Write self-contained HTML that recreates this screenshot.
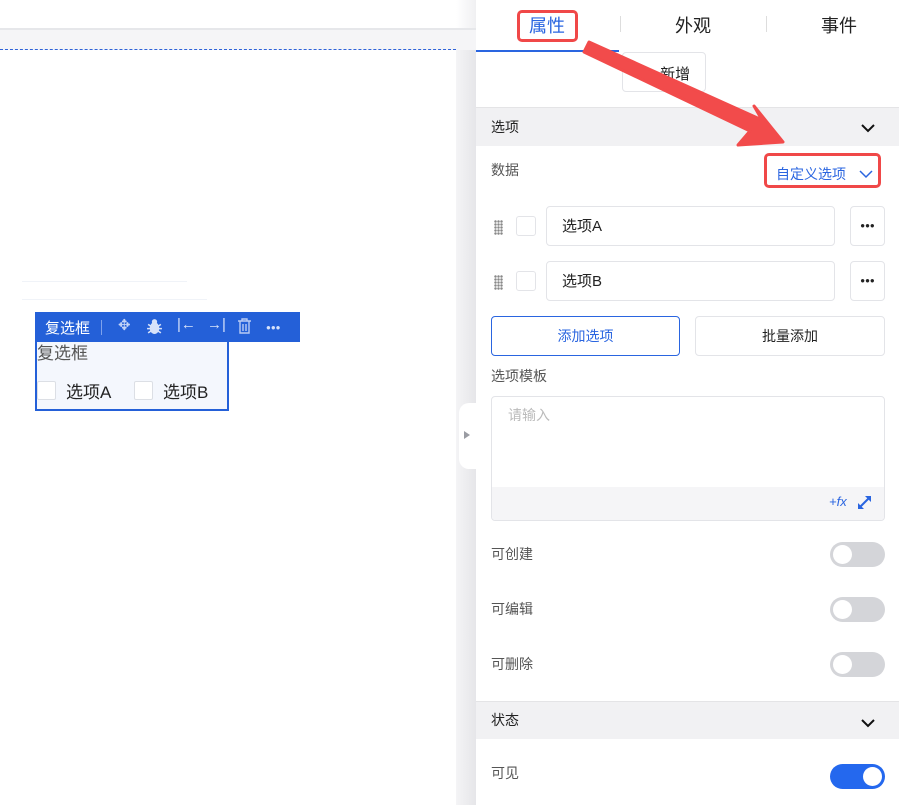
<!DOCTYPE html>
<html><head><meta charset="utf-8"><style>
*{box-sizing:border-box;margin:0;padding:0}
body{width:899px;height:805px;overflow:hidden;background:#fff;font-family:"Liberation Sans","Noto Sans CJK SC",sans-serif;position:relative;font-size:14px;color:#222}
.a{position:absolute}
.sw{position:absolute;left:830px;width:55px;height:25px;border-radius:13px;background:#d4d5d9}
.sw .k{position:absolute;left:3px;top:3px;width:19px;height:19px;border-radius:50%;background:#fff}
.lbl{position:absolute;left:491px;color:#555;font-size:14px}
.box{position:absolute;border:1px solid #e3e4e8;border-radius:4px;background:#fff}
.dots{position:absolute;left:0;width:33px;top:14px;text-align:center;font-size:8px;color:#222}
</style></head><body>
<div class="a" style="left:0;top:28px;width:476px;height:22px;background:#f5f5f7;border-top:2px solid #e6e7ea"></div>
<div class="a" style="left:0;top:49px;width:456px;height:0;border-top:1px dashed #2f63d8"></div>
<div class="a" style="left:456px;top:0;width:20px;height:28px;background:linear-gradient(90deg,#fff,#f0f0f2)"></div>
<div class="a" style="left:456px;top:50px;width:20px;height:755px;background:linear-gradient(90deg,#f4f4f6,#e6e6e9)"></div>
<div class="a" style="left:459px;top:403px;width:17px;height:66px;background:#fff;border-radius:10px 0 0 10px"></div>
<div class="a" style="left:464px;top:431px;width:0;height:0;border-left:6px solid #9a9ca3;border-top:4px solid transparent;border-bottom:4px solid transparent"></div>
<div class="a" style="left:22px;top:281px;width:165px;height:1px;background:#f0f3f8"></div>
<div class="a" style="left:22px;top:299px;width:185px;height:1px;background:#f0f3f8"></div>
<div class="a" style="left:35px;top:312px;width:265px;height:30px;background:#2460d8;color:#fff;font-size:15px">
<span class="a" style="left:10px;top:5px">复选框</span>
<span class="a" style="left:66px;top:8px;width:1px;height:15px;background:#7ea2ec"></span>
<span class="a" style="left:83px;top:4px;font-size:15px;color:#c5d5f7">✥</span>
<svg class="a" style="left:111px;top:6px" width="17" height="17" viewBox="0 0 16 16"><ellipse cx="8" cy="9.5" rx="4.5" ry="5.5" fill="#d7e2fa"/><circle cx="8" cy="3.5" r="2.5" fill="#d7e2fa"/><path d="M2 6l3 2M14 6l-3 2M1 10h3M15 10h-3M2 14l3-2M14 14l-3-2" stroke="#d7e2fa" stroke-width="1.5"/></svg>
<span class="a" style="left:142px;top:4px;color:#d7e2fa">|←</span>
<span class="a" style="left:172px;top:4px;color:#d7e2fa">→|</span>
<svg class="a" style="left:202px;top:6px" width="15" height="17" viewBox="0 0 15 17"><path d="M1 3h13M5 3V1h5v2M3 3v12h9V3M6 6v7M9 6v7" stroke="#b9cbf4" stroke-width="1.4" fill="none"/></svg>
<span class="a" style="left:231px;top:11px;font-size:8px;color:#d7e2fa">●●●</span>
</div>
<div class="a" style="left:35px;top:342px;width:194px;height:69px;background:#f4f7fd;border:2px solid #2460d8;border-top:none">
<span class="a" style="left:0;top:-3px;font-size:17px;color:#555">复选框</span>
<span class="a" style="left:0;top:39px;width:19px;height:19px;border:1px solid #dcdfe5;background:#fff;border-radius:2px"></span>
<span class="a" style="left:29px;top:36px;font-size:17px">选项A</span>
<span class="a" style="left:97px;top:39px;width:19px;height:19px;border:1px solid #dcdfe5;background:#fff;border-radius:2px"></span>
<span class="a" style="left:126px;top:36px;font-size:17px">选项B</span>
</div>
<div class="a" style="left:476px;top:0;width:423px;height:805px;background:#fff"></div>
<span class="a" style="left:529px;top:12px;font-size:18px;color:#2a65e0">属性</span>
<div class="a" style="left:517px;top:10px;width:61px;height:32px;border:3px solid #f04848;border-radius:5px"></div>
<span class="a" style="left:620px;top:16px;width:1px;height:16px;background:#ddd"></span>
<span class="a" style="left:675px;top:12px;font-size:18px">外观</span>
<span class="a" style="left:766px;top:16px;width:1px;height:16px;background:#ddd"></span>
<span class="a" style="left:821px;top:12px;font-size:18px">事件</span>
<div class="a" style="left:476px;top:50px;width:143px;height:2px;background:#2a65e0"></div>
<div class="box" style="left:622px;top:52px;width:84px;height:40px;border-radius:4px"><span class="a" style="left:20px;top:10px;font-size:15px">+&nbsp;&nbsp;新增</span></div>
<div class="a" style="left:476px;top:107px;width:423px;height:39px;background:#f1f1f3;border-top:1px solid #e4e4e6"><span class="a" style="left:15px;top:9px;font-size:14px">选项</span><svg class="a" style="left:385px;top:15px" width="14" height="10"><path d="M1 2l6 6 6-6" stroke="#111" stroke-width="2" fill="none"/></svg></div>
<span class="lbl" style="top:160px">数据</span>
<span class="a" style="left:776px;top:164px;font-size:14px;color:#2a65e0">自定义选项</span>
<svg class="a" style="left:859px;top:170px" width="14" height="9"><path d="M1 1l6 6 6-6" stroke="#2a65e0" stroke-width="1.5" fill="none"/></svg>
<div class="a" style="left:764px;top:153px;width:117px;height:35px;border:3px solid #f04848;border-radius:5px"></div>
<div class="a" style="left:494px;top:220px;width:9px;height:15px;background:radial-gradient(circle,#888 1.1px,transparent 1.4px) 0 0/3px 3px"></div>
<div class="box" style="left:516px;top:216px;width:20px;height:20px;border-radius:3px"></div>
<div class="box" style="left:546px;top:206px;width:289px;height:40px"><span class="a" style="left:15px;top:8px;font-size:15px">选项A</span></div>
<div class="box" style="left:850px;top:206px;width:35px;height:40px"><span class="dots">●●●</span></div>
<div class="a" style="left:494px;top:275px;width:9px;height:15px;background:radial-gradient(circle,#888 1.1px,transparent 1.4px) 0 0/3px 3px"></div>
<div class="box" style="left:516px;top:271px;width:20px;height:20px;border-radius:3px"></div>
<div class="box" style="left:546px;top:261px;width:289px;height:40px"><span class="a" style="left:15px;top:8px;font-size:15px">选项B</span></div>
<div class="box" style="left:850px;top:261px;width:35px;height:40px"><span class="dots">●●●</span></div>
<div class="box" style="left:491px;top:316px;width:189px;height:40px;border-color:#2a65e0"><span class="a" style="left:0;width:187px;text-align:center;top:9px;color:#2a65e0">添加选项</span></div>
<div class="box" style="left:695px;top:316px;width:190px;height:40px"><span class="a" style="left:0;width:188px;text-align:center;top:9px">批量添加</span></div>
<span class="lbl" style="top:366px">选项模板</span>
<div class="box" style="left:491px;top:396px;width:394px;height:125px;overflow:hidden">
<span class="a" style="left:16px;top:8px;color:#bbb">请输入</span>
<div class="a" style="left:0;top:90px;width:394px;height:35px;background:#f5f5f7"><span class="a" style="left:337px;top:7px;color:#2a65e0;font-style:italic;font-size:13px">+fx</span>
<svg class="a" style="left:365px;top:8px" width="15" height="15" viewBox="0 0 15 15"><path d="M2 13L13 2" stroke="#2a65e0" stroke-width="2"/><path d="M8 1h6v6zM1 8v6h6z" fill="#2a65e0"/></svg></div>
</div>
<span class="lbl" style="top:544px">可创建</span><div class="sw" style="top:542px"><span class="k"></span></div>
<span class="lbl" style="top:599px">可编辑</span><div class="sw" style="top:597px"><span class="k"></span></div>
<span class="lbl" style="top:654px">可删除</span><div class="sw" style="top:652px"><span class="k"></span></div>
<div class="a" style="left:476px;top:701px;width:423px;height:38px;background:#f1f1f3;border-top:1px solid #e4e4e6"><span class="a" style="left:15px;top:8px;font-size:14px">状态</span><svg class="a" style="left:385px;top:16px" width="14" height="10"><path d="M1 2l6 6 6-6" stroke="#111" stroke-width="2" fill="none"/></svg></div>
<span class="lbl" style="top:763px">可见</span>
<div class="sw" style="top:764px;background:#2468ee"><span class="k" style="left:33px"></span></div>
<svg class="a" style="left:0;top:0" width="899" height="805"><path d="M584 52L589 42L762 120L754 106L783 142L738 145L750 131Z" fill="#f24b4b" stroke="#f24b4b" stroke-width="3" stroke-linejoin="round"/></svg>
</body></html>
